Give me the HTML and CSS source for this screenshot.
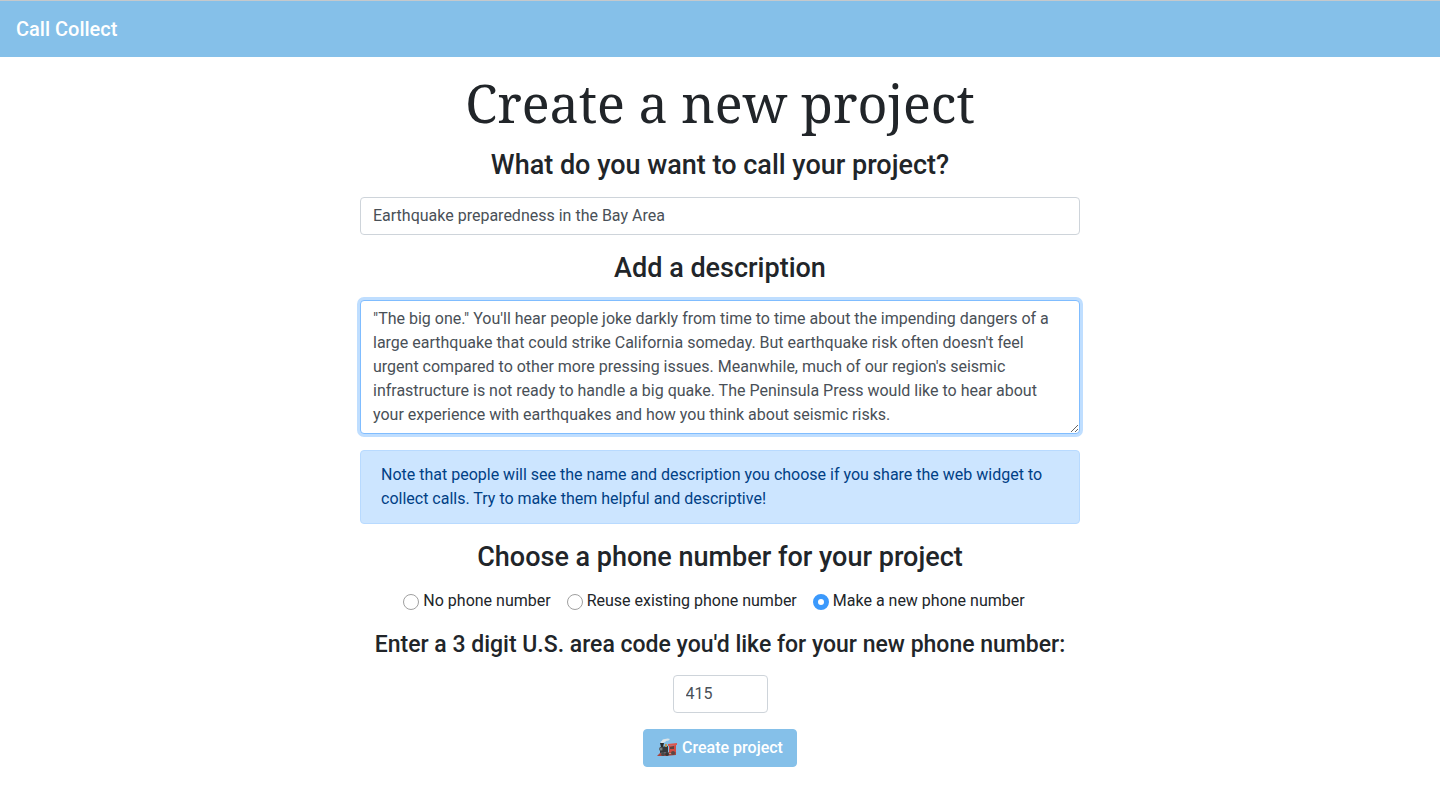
FILE: index.html
```html
<!DOCTYPE html>
<html lang="en">
<head>
<meta charset="utf-8">
<title>Call Collect</title>
<link rel="stylesheet" href="styles.css">
</head>
<body>
<nav class="navbar"><a class="brand" href="#">Call Collect</a></nav>
<main class="page">
  <h1 class="title">Create a new project</h1>
  <form class="form">
    <label class="heading" for="name">What do you want to call your project?</label>
    <input class="control" id="name" type="text" value="Earthquake preparedness in the Bay Area">
    <label class="heading" for="description">Add a description</label>
    <textarea class="control control-focus" id="description" rows="5">"The big one." You'll hear people joke darkly from time to time about the impending dangers of a large earthquake that could strike California someday. But earthquake risk often doesn't feel urgent compared to other more pressing issues. Meanwhile, much of our region's seismic infrastructure is not ready to handle a big quake. The Peninsula Press would like to hear about your experience with earthquakes and how you think about seismic risks.</textarea>
    <p class="note">Note that people will see the name and description you choose if you share the web widget to collect calls. Try to make them helpful and descriptive!</p>
    <fieldset class="choices">
      <legend class="heading">Choose a phone number for your project</legend>
      <div class="options">
        <label class="option"><input class="radio" type="radio" name="phone">No phone number</label>
        <label class="option"><input class="radio" type="radio" name="phone">Reuse existing phone number</label>
        <label class="option"><input class="radio" type="radio" name="phone" checked>Make a new phone number</label>
      </div>
    </fieldset>
    <label class="subheading" for="area">Enter a 3 digit U.S. area code you'd like for your new phone number:</label>
    <input class="control area" id="area" type="text" value="415">
    <button class="submit" type="button">
      <svg class="train" viewBox="0 0 20 20" aria-hidden="true">
        <path d="M4 5Q3 3 5 3 5 1 8 1q3-1 5 0-1 2-4 2Q8 5 4 5z" fill="#dce5ea"/>
        <path d="M3 5h4l-1 4H4z" fill="#292b2d"/>
        <path d="M3 9l8-1v6l-8 1z" fill="#35383a"/>
        <path d="M8 6h2v3H8z" fill="#b59a5b"/>
        <path d="M11 6l9-1v2l-9 1z" fill="#dc5850"/>
        <path d="M12 8l7-1v8h-7z" fill="#d34b42"/>
        <path d="M13 9l4-1v3h-4z" fill="#5a4441"/>
        <path d="M0 18l3-3 16-1v3l-11 1z" fill="#a8443e"/>
        <path d="M4 15h13v1H4z" fill="#bd9a7d"/>
        <circle cx="6" cy="16" r="2" fill="#47484a"/><circle cx="10" cy="16" r="2" fill="#343638"/><circle cx="16" cy="15" r="2" fill="#5b4745"/>
        <circle cx="4" cy="11" r="2" fill="#555b5d"/><circle cx="4" cy="11" r="1" fill="#858b8d"/>
      </svg>
      <span>Create project</span>
    </button>
  </form>
</main>
</body>
</html>
```
FILE: styles.css
```css
* { box-sizing: border-box; }
body { margin: 0; background: #fff; color: #212529; font: 16px/24px Roboto, "Liberation Sans", sans-serif; }
.navbar { padding: 13px 16px; background: #85c0e9; border-top: 1px solid #c5c9cc; }
.brand { display: block; color: #fff; font-size: 20px; line-height: 30px; font-weight: 500; text-decoration: none; }
.page { width: 50%; min-width: 320px; margin: 0 auto; padding-top: 12px; }
.title { margin: 0 0 11px; font: 400 52px/68px "Noto Serif", "DejaVu Serif", serif; text-align: center; }
.form { display: flex; flex-direction: column; align-items: center; }
.heading { font-size: 27px; line-height: 35px; font-weight: 500; margin-bottom: 14px; text-align: center; }
.subheading { font-size: 23px; line-height: 32px; font-weight: 500; margin-bottom: 14px; text-align: center; }
.control { display: block; width: 100%; margin: 0 0 16px; padding: 6px 12px; border: 1px solid #ced4da; border-radius: 4px; background: #fff; color: #495057; font: inherit; outline: 0; }
.control-focus { border-color: #80bdff; box-shadow: 0 0 0 3px #bfdeff; resize: vertical; }
.note { margin: 0 0 16px; padding: 12px 20px; border: 1px solid #b8daff; border-radius: 4px; background: #cce5ff; color: #004085; }
.choices { width: 100%; margin: 0 0 16px; padding: 0; border: 0; }
.choices .heading { width: 100%; padding: 0; }
.options { display: flex; justify-content: center; gap: 4px; }
.option { display: flex; align-items: center; gap: 4px; margin-right: 12px; white-space: nowrap; }
.radio { appearance: none; width: 16px; height: 16px; margin: 2px 0 0; border: 1px solid #a0a0a0; border-radius: 50%; background: #fff; }
.radio:checked { border: 5px solid #3b99fc; }
.control.area { width: 95px; }
.submit { display: flex; align-items: center; gap: 5px; padding: 6px 13px; border: 1px solid #85c0e9; border-radius: 4px; background: #85c0e9; color: #fff; font: 500 16px/24px Roboto, "Liberation Sans", sans-serif; }
.train { width: 20px; height: 20px; }
```
